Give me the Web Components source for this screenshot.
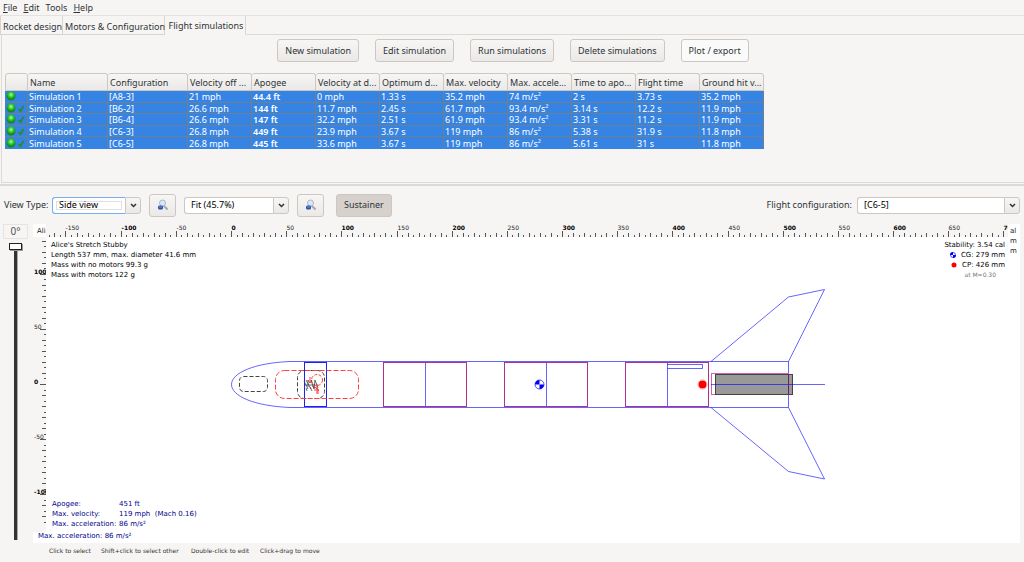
<!DOCTYPE html>
<html lang="en">
<head>
<meta charset="utf-8">
<title>Rocket flight simulations</title>
<style>
html, body { margin: 0; height: 100%; }
body { background: #f6f5f4; color: #2e3436; font: 9px/12px "Noto Sans", "Open Sans", sans-serif; overflow: hidden; }
</style>
</head>
<body>
<rocket-app></rocket-app>
<script>
const define = (name, html, setup) => customElements.define(name, class extends HTMLElement {
  constructor() {
    super();
    this.attachShadow({ mode: "open" }).innerHTML = html;
  }
  connectedCallback() { if (setup && !this.ready) { this.ready = true; setup(this, this.shadowRoot); } }
});

define("menu-bar", `
<style>
:host { display: block; height: 15px; line-height: 15px; }
nav { display: flex; gap: 6px; padding-left: 3px; }
button { all: unset; }
</style>
<nav><button><u>F</u>ile</button><button><u>E</u>dit</button><button>Tools</button><button><u>H</u>elp</button></nav>`);

define("tab-bar", `
<style>
:host { display: block; border-top: 1px solid #e4e1de; }
div { display: flex; }
button { all: unset; box-sizing: border-box; height: 19px; line-height: 22px; padding-left: 2px; text-align: center; border: solid #d8d5d1; border-width: 0 1px 1px 0; white-space: nowrap; }
.a { width: 63px; border-left-width: 1px; }
.b { width: 102px; }
.c { width: 81px; border-bottom-color: transparent; line-height: 20px; }
i { flex: 1; border-bottom: 1px solid #dcd9d6; }
</style>
<div role="tablist"><button class="a" role="tab">Rocket design</button><button class="b" role="tab">Motors &amp; Configuration</button><button class="c" role="tab" aria-selected="true">Flight simulations</button><i></i></div>`);

define("tool-button", `
<style>
:host { display: block; }
button { display: flex; align-items: center; justify-content: center; box-sizing: border-box; width: 100%; height: 23px; margin: 0; padding: 0 7px; border: 1px solid #cdc7c2; border-radius: 3px; background: linear-gradient(#f7f6f5, #ebe9e7); color: #2e3436; font: inherit; white-space: nowrap; }
:host([flat]) button { background: #fbfafa; }
:host([pressed]) button { background: #d6d1cd; }
</style>
<button><slot></slot></button>`, (host, root) => {
  if (host.hasAttribute("label")) root.querySelector("button").setAttribute("aria-label", host.getAttribute("label"));
});

define("zoom-icon", `
<style>:host { display: block; width: 12px; height: 12px; } svg { display: block; }</style>
<svg width="12" height="12" viewBox="0 0 12 12">
<path d="M7 7l3 3" stroke="#a8a8a8" stroke-width="2" stroke-linecap="round"/>
<circle cx="5.500" cy="4" r="3" fill="#d9e7f7" stroke="#a9b7c9"/>
<rect x="1" y="6.500" width="5" height="4" rx="1.500" fill="#2c4fae"/>
<path d="M2 8h3" stroke="#7391dd" stroke-width="1"/>
</svg>`);

define("combo-box", `
<style>
:host { display: block; height: 17px; }
label { display: grid; grid-template-columns: 1fr 16px; height: 100%; }
select { grid-area: 1 / 1; appearance: none; min-width: 0; margin: 0; padding: 0 0 0 6px; border: 1px solid #cdc7c2; border-right: 0; border-radius: 3px 0 0 3px; background: #fff; color: #000; font: inherit; outline: 0; }
:host([focused]) select { border-color: #78aeed; box-shadow: inset 0 0 0 3px #fff, inset 0 0 0 4px #e0e0e0; }
span { box-sizing: border-box; border: 1px solid #cdc7c2; border-radius: 0 3px 3px 0; background: linear-gradient(#f7f6f5, #ebe9e7); display: grid; place-items: center; }
</style>
<label><select></select><span><svg width="7" height="5" viewBox="0 0 7 5"><path d="M1 1l2.500 2.500L6 1" fill="none" stroke="#2e3436" stroke-width="1.500"/></svg></span></label>`, (host, root) => {
  const s = root.querySelector("select");
  s.add(new Option(host.getAttribute("value")));
  s.setAttribute("aria-label", host.getAttribute("label"));
});

define("simulation-table", `
<style>
:host { display: block; padding: 0 0 0 5px; }
table { border-collapse: separate; border-spacing: 0; table-layout: fixed; width: 759px; height: 76px; }
th, td { padding: 0; text-align: left; white-space: nowrap; box-sizing: border-box; }
th { height: 18px; padding: 2px 0 0 2px; line-height: 12px; font-weight: 400; border: solid #cdc7c2; border-width: 1px 1px 1px 0; border-radius: 3px 3px 0 0; background: linear-gradient(#f7f6f5, #ebe9e7); }
th:first-child { border-left-width: 1px; }
td { padding: 2px 0 0 1px; line-height: 8px; color: #fff; background: #3584e4; border: solid #6f7f92; border-width: 0 1px 1px 0; }
td:first-child { padding-top: 0; }
td:nth-child(5) { font-weight: 600; }
tr:last-child td { border-bottom-color: #3584e4; }
svg { display: block; }
</style>
<table><colgroup></colgroup><thead><tr></tr></thead><tbody></tbody></table>`, (host, root) => {
  const heads = ["", "Name", "Configuration", "Velocity off ...", "Apogee", "Velocity at d...", "Optimum d...", "Max. velocity", "Max. accele...", "Time to apo...", "Flight time", "Ground hit v..."];
  const rows = [
    "[A8-3]|21 mph|44.4 ft|0 mph|1.33 s|35.2 mph|74 m/s²|2 s|3.73 s|35.2 mph",
    "[B6-2]|26.6 mph|144 ft|11.7 mph|2.45 s|61.7 mph|93.4 m/s²|3.14 s|12.2 s|11.9 mph",
    "[B6-4]|26.6 mph|147 ft|32.2 mph|2.51 s|61.9 mph|93.4 m/s²|3.31 s|11.2 s|11.9 mph",
    "[C6-3]|26.8 mph|449 ft|23.9 mph|3.67 s|119 mph|86 m/s²|5.38 s|31.9 s|11.8 mph",
    "[C6-5]|26.8 mph|445 ft|33.6 mph|3.67 s|119 mph|86 m/s²|5.61 s|31 s|11.8 mph"];
  root.querySelector("colgroup").innerHTML = heads.map((h, i) => `<col style="width:${i === 0 ? 23 : i < 3 ? 80 : 64}px">`).join("");
  root.querySelector("thead tr").innerHTML = heads.map(h => `<th>${h}</th>`).join("");
  const status = checked => `<svg width="22" height="10" viewBox="0 0 22 10"><defs><radialGradient id="g" cy=".35"><stop offset="0" stop-color="#b4f9aa"/><stop offset=".5" stop-color="#35d42e"/><stop offset="1" stop-color="#168a18"/></radialGradient></defs><circle cx="5" cy="5" r="4.500" fill="url(#g)"/>${checked ? '<path d="M12.500 6l2 2.200L17.500 3" fill="none" stroke="#2a8a2c" stroke-width="1.800"/>' : ""}</svg>`;
  root.querySelector("tbody").innerHTML = rows.map((r, i) => `<tr><td>${status(i > 0)}</td><td>Simulation ${i + 1}</td>${r.split("|").map(c => `<td>${c}</td>`).join("")}</tr>`).join("");
});

define("rotation-slider", `
<style>
:host { display: flex; flex-direction: column; align-items: center; box-sizing: border-box; width: 33px; padding-right: 2px; }
output { box-sizing: border-box; width: 25px; height: 15px; border: 1px solid #e6e3e0; text-align: center; line-height: 13px; font-size: 10px; color: #555; }
input { appearance: none; writing-mode: vertical-lr; flex: 1; width: 14px; min-height: 0; margin: 4px 0 3px; background: linear-gradient(90deg, transparent 5px, #333 5px, #333 8px, #aaa 8px, #aaa 9px, transparent 9px); outline: 0; }
input::-webkit-slider-thumb { appearance: none; box-sizing: border-box; width: 13px; height: 7px; border: 1px solid #222; background: #fff; box-shadow: 1px 1px 0 #999; }
</style>
<output>0°</output><input type="range" min="0" max="360" value="0" aria-label="Rotation">`);

const SCALE = 1.1035;
define("mm-ruler", `
<style>
:host { display: block; overflow: hidden; min-width: 0; min-height: 0; contain: size; }
svg { display: block; width: 100%; height: 100%; overflow: hidden; font: 6px "DejaVu Sans", sans-serif; fill: #222; }
path { stroke: #555; fill: none; }
.major { font-weight: 700; fill: #000; }
</style>
<svg></svg>`, (host, root) => {
  const vertical = host.hasAttribute("vertical");
  let d = "", texts = "";
  const [from, to] = vertical ? [-125, 130] : [-165, 700];
  for (let mm = from; mm <= to; mm += 5) {
    const len = mm % 50 === 0 ? 6 : mm % 10 === 0 ? 4 : 2;
    const p = vertical ? Math.round(147 - mm * SCALE) + .5 : Math.round(185 + mm * SCALE) + .5;
    d += vertical ? `M${13 - len} ${p}H13` : `M${p} ${13 - len}V13`;
    if (mm % 50 === 0) {
      const cls = mm % 100 === 0 ? ' class="major"' : "";
      texts += vertical ? `<text x="1" y="${p - 1}"${cls}>${mm}</text>` : `<text x="${p}" y="6"${cls}>${mm}</text>`;
    }
  }
  root.querySelector("svg").innerHTML = `<path d="${d}"/>${texts}`;
});

define("rocket-drawing", `
<style>
:host { display: block; position: relative; background: #fff; overflow: hidden; contain: size; font: 7px/10px "DejaVu Sans", sans-serif; color: #000; }
svg.rocket { position: absolute; inset: 0; width: 100%; height: 100%; }
.info, .flight, .stability { position: absolute; white-space: pre; }
.info { left: 5px; top: 3px; }
.stability { right: 3px; top: 3px; text-align: right; }
.stability small { font-size: 6px; color: #777; margin-right: 9px; }
.stability svg { width: 6px; height: 6px; margin-right: 5px; vertical-align: -1px; }
.flight { left: 6px; bottom: 3px; color: #00008b; display: grid; grid-template-columns: 67px auto; margin: 0; }
dd { margin: 0; }
</style>
<svg class="rocket" fill="none"><g transform="translate(-46 -237)">
<g stroke="#0000ff" stroke-opacity=".6">
<path d="M788.500 361.500H290C254 363 231.500 373 231.500 384.500S254 406 290 407.500H788.500Z"/>
<path d="M711 361.500L788.500 297L824.500 289.500L788.500 361.500M711 407.500L788.500 471.500L824.500 479L788.500 407.500"/>
<path d="M425.500 362V407M546.500 362V407M667.500 362V407M667.500 364.500H702.500V368.500H667.500"/>
</g>
<rect x="304.500" y="362.500" width="22" height="44" stroke="#2020e8"/>
<g stroke="#b03090"><rect x="383.500" y="362.500" width="83" height="44"/><rect x="504.500" y="362.500" width="83" height="44"/><rect x="625.500" y="362.500" width="83" height="44"/></g>
<rect x="711.500" y="373.500" width="77" height="21" stroke="#d860a8"/>
<g stroke="#444" stroke-dasharray="4 2"><rect x="239.500" y="376.500" width="28" height="15" rx="4"/><rect x="297.500" y="370.500" width="27" height="28" rx="7"/></g>
<g stroke="#ff4040"><rect x="275.500" y="370.500" width="83" height="28" rx="9" stroke-dasharray="5 2"/>
<circle cx="317" cy="380" r="5.500" stroke-dasharray="3 1.500"/><path d="M310 377v6M308 380l2 3 2-3M312 386l6 3v5M315 387l4 4M317 384v10M314 390h5"/></g>
<path d="M304 381l4 8M306 380l5 9M308 380v7M311 380l3 9 1-9 3 8M305 385h10M307 391l-1-3M312 391l-2-4" stroke="#444" stroke-width=".8"/>
<rect x="715.500" y="374.500" width="77" height="20" fill="#000" fill-opacity=".4" stroke="#444"/>
<path d="M711 384.500H825" stroke="#0000ff" stroke-opacity=".6"/>
<path d="M788.500 374V395" stroke="#702060"/>
<circle cx="539.500" cy="384.500" r="4.500" fill="#fff" stroke="#2020ff" stroke-width=".8"/>
<path d="M539.500 384.500V380A4.500 4.500 0 0 0 535 384.500ZM539.500 384.500V389A4.500 4.500 0 0 0 544 384.500Z" fill="#00f"/>
<circle cx="702.500" cy="384.500" r="4" fill="#f00"/><circle cx="702.500" cy="384.500" r="4.500" stroke="#f88" stroke-width=".8"/>
</g></svg>
<div class="info">Alice's Stretch Stubby
Length 537 mm, max. diameter 41.6 mm
Mass with no motors 99.3 g
Mass with motors 122 g</div>
<div class="stability">Stability: 3.54 cal
<svg viewBox="0 0 6 6"><circle cx="3" cy="3" r="2.500" fill="#fff" stroke="#22f" stroke-width=".8"/><path d="M3 3V0A3 3 0 0 0 0 3ZM3 3V6A3 3 0 0 0 6 3Z" fill="#00f"/></svg>CG: 279 mm
<svg viewBox="0 0 6 6"><circle cx="3" cy="3" r="2.500" fill="#f00"/></svg>CP: 426 mm
<small>at M=0.30</small></div>
<dl class="flight"><dt>Apogee:</dt><dd>451 ft</dd><dt>Max. velocity:</dt><dd>119 mph  (Mach 0.16)</dd><dt>Max. acceleration:</dt><dd>86 m/s²</dd></dl>`);

define("rocket-figure", `
<style>
:host { flex: 1; min-width: 0; display: grid; grid-template: 13px minmax(0, 1fr) 11px / 13px minmax(0, 1fr) 12px; background: #fff; color: #222; font: 7px/10px "DejaVu Sans", sans-serif; }
mm-ruler { background: #f6f5f4; }
.corner { padding: 2px 0 0 4px; white-space: nowrap; }
.right { grid-area: 1 / 3 / 4; padding: 2px 0 0 2px; white-space: pre; }
.foot { grid-area: 3 / 1 / 4 / 3; color: #00008b; padding-left: 5px; line-height: 8px; white-space: pre; }
</style>
<div class="corner">Ali</div><mm-ruler></mm-ruler><div class="right">al
m
m</div><mm-ruler vertical></mm-ruler><rocket-drawing></rocket-drawing>
<div class="foot">Max. acceleration: 86 m/s²</div>`);

define("rocket-app", `
<style>
:host { display: flex; flex-direction: column; height: 100vh; box-sizing: border-box; }
.panel { box-sizing: border-box; height: 148px; border: solid #dcd9d6; border-width: 0 0 1px 1px; margin-left: 1px; }
.actions { display: flex; justify-content: center; gap: 16px; padding: 4px 0 11px; }
.view { display: flex; align-items: center; box-sizing: border-box; height: 40px; margin-top: 1px; border-top: 2px solid #dcd9d6; padding: 0 4px; }
.view > * { flex: none; }
.view > .spring { flex: 1; }
simulation-table { margin-left: -2px; }
main { flex: 1; min-height: 0; display: flex; padding-right: 4px; }
footer { display: grid; grid-template-columns: 52px 90px 69px auto; height: 19px; padding-left: 49px; font: 6px/15px "DejaVu Sans", sans-serif; color: #333; white-space: nowrap; }
</style>
<menu-bar></menu-bar>
<tab-bar></tab-bar>
<section class="panel">
<div class="actions"><tool-button>New simulation</tool-button><tool-button>Edit simulation</tool-button><tool-button>Run simulations</tool-button><tool-button>Delete simulations</tool-button><tool-button flat>Plot / export</tool-button></div>
<simulation-table></simulation-table>
</section>
<div class="view">
<span style="width:48px">View Type:</span>
<combo-box focused label="View type" value="Side view" style="width:89px"></combo-box>
<tool-button label="Zoom out" style="width:27px;margin:0 8px"><zoom-icon></zoom-icon></tool-button>
<combo-box label="Zoom" value="Fit (45.7%)" style="width:105px"></combo-box>
<tool-button label="Zoom in" style="width:27px;margin:0 12px 0 8px"><zoom-icon></zoom-icon></tool-button>
<tool-button pressed>Sustainer</tool-button>
<span class="spring"></span>
<span style="margin-right:5px">Flight configuration:</span>
<combo-box label="Flight configuration" value="[C6-5]" style="width:163px"></combo-box>
</div>
<main><rotation-slider></rotation-slider><rocket-figure></rocket-figure></main>
<footer><span>Click to select</span><span>Shift+click to select other</span><span>Double-click to edit</span><span>Click+drag to move</span></footer>`);
</script>
</body>
</html>
